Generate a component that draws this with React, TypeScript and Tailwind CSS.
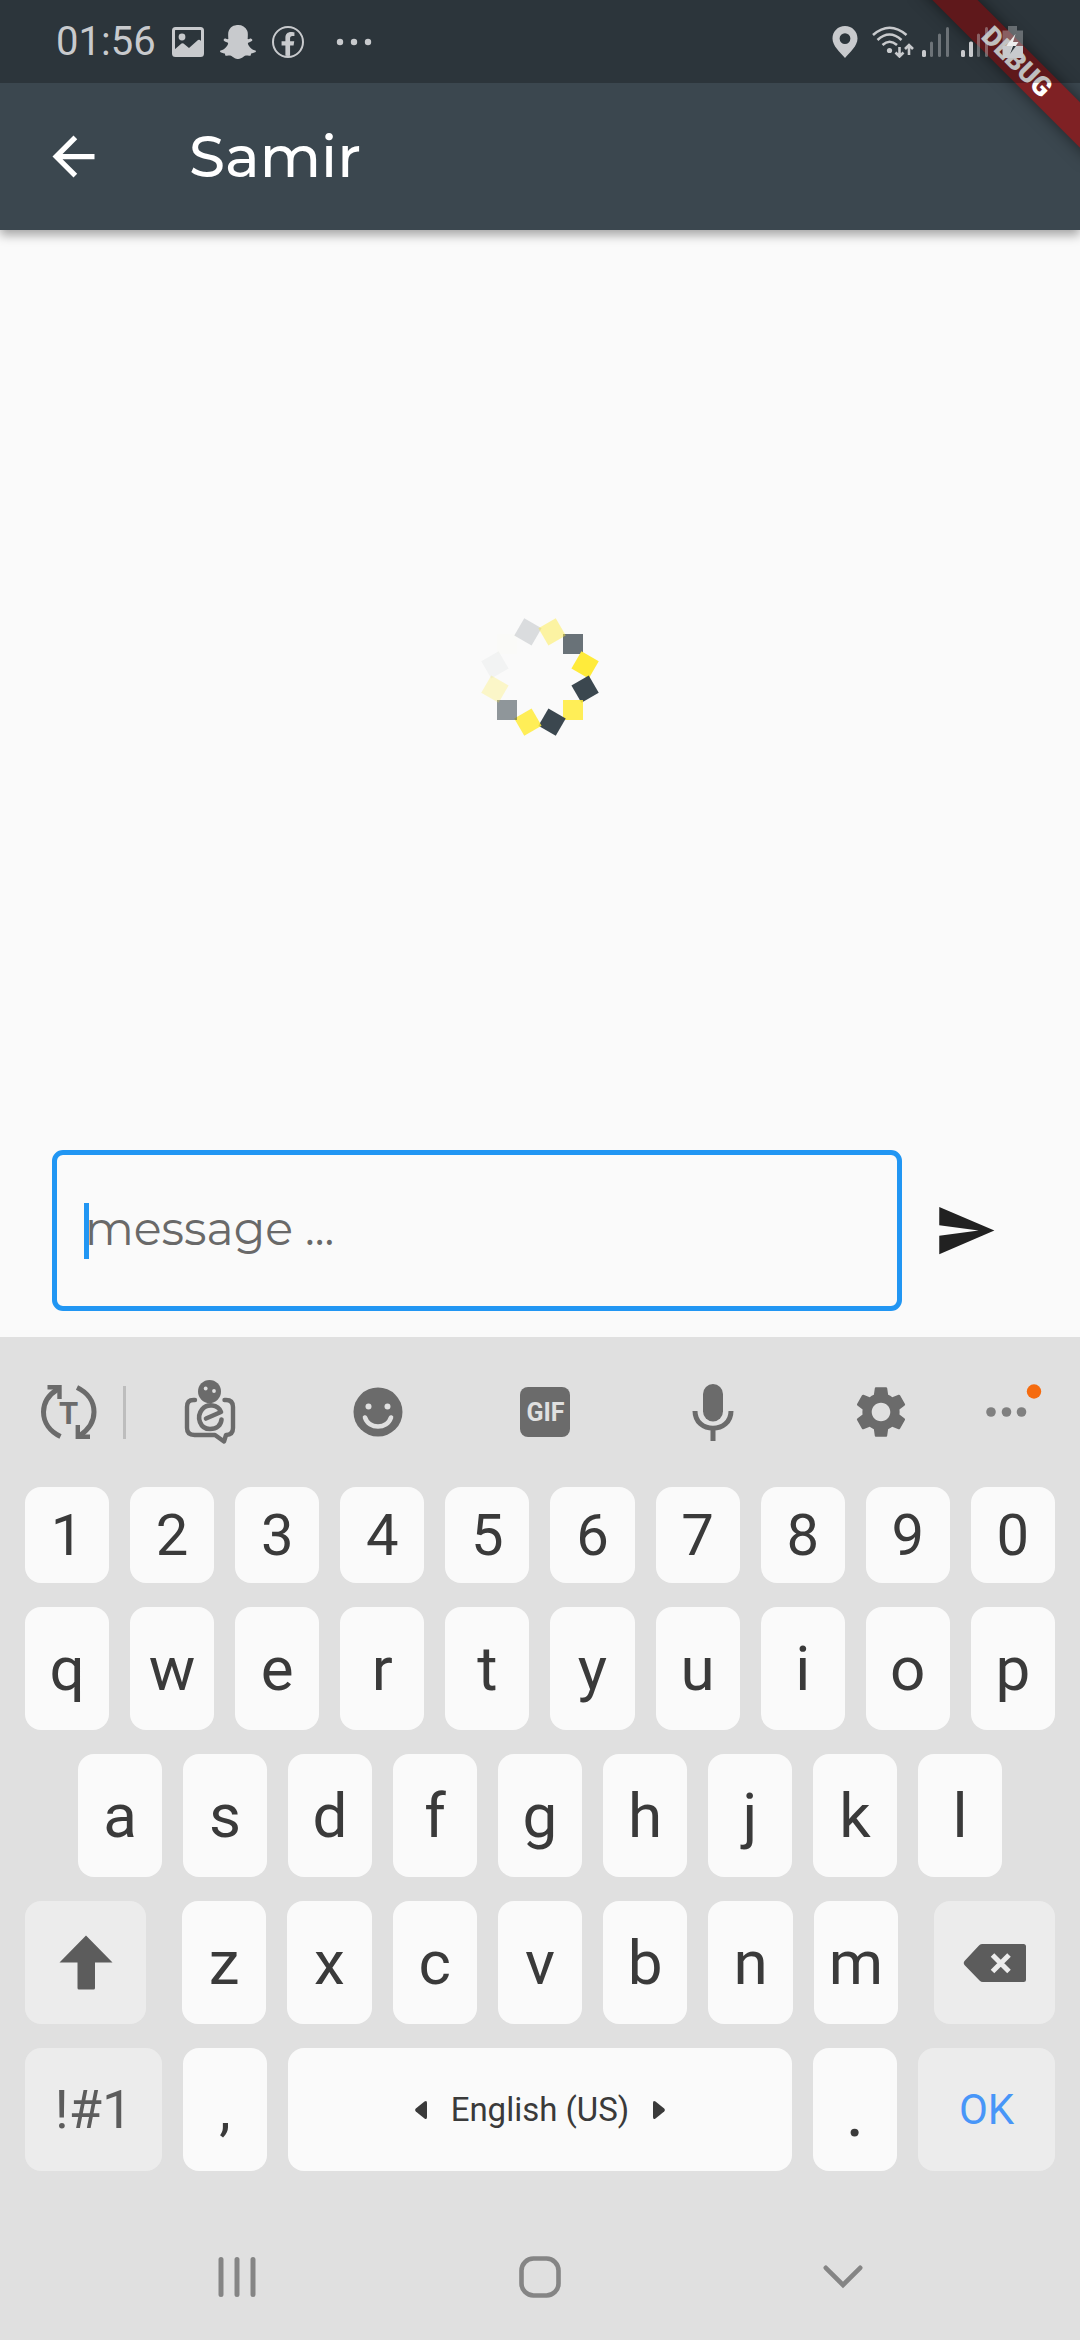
import type { ReactNode } from "react";
import { FaFacebookF, FaSnapchatGhost } from "react-icons/fa";
import { MdArrowBack, MdSend, MdSettings } from "react-icons/md";

const SPINNER_SQUARES = [
  { fill: "#3b474f", opacity: 0.76 },
  { fill: "#ffeb3b", opacity: 1 },
  { fill: "#3b474f", opacity: 1 },
  { fill: "#ffeb3b", opacity: 0.86 },
  { fill: "#3b474f", opacity: 1 },
  { fill: "#ffeb3b", opacity: 0.86 },
  { fill: "#3b474f", opacity: 0.56 },
  { fill: "#ffeb3b", opacity: 0.26 },
  { fill: "#3b474f", opacity: 0.04 },
  { fill: "#ffeb3b", opacity: 0.01 },
  { fill: "#3b474f", opacity: 0.16 },
  { fill: "#ffeb3b", opacity: 0.46 },
];

function Spinner() {
  return (
    <svg role="status" aria-label="Loading" className="size-32" viewBox="-64 -64 128 128">
      {SPINNER_SQUARES.map((s, i) => (
        <rect
          key={i}
          x="23"
          y="-43"
          width="20"
          height="20"
          fill={s.fill}
          fillOpacity={s.opacity}
          transform={`rotate(${i * 30})`}
        />
      ))}
    </svg>
  );
}

function PictureIcon() {
  return (
    <svg className="h-[30px] w-8" viewBox="0 0 32 30" fill="none">
      <rect x="1.5" y="1.5" width="29" height="27" rx="2" stroke="currentColor" strokeWidth="3" />
      <circle cx="10" cy="10" r="3.4" fill="currentColor" />
      <path d="M2 23 9.500 16.500Q10.500 16 11.500 16.500L17 21 26 13Q27 12.300 28 13L31 16V28H2Z" fill="currentColor" />
    </svg>
  );
}

function DotsIcon() {
  return (
    <svg className="h-8 w-9" viewBox="0 0 36 32" fill="currentColor">
      <circle cx="4" cy="16" r="3.2" />
      <circle cx="18" cy="16" r="3.2" />
      <circle cx="32" cy="16" r="3.2" />
    </svg>
  );
}

function PinIcon() {
  return (
    <svg className="h-8 w-[26px]" viewBox="0 0 26 32" fill="currentColor" fillRule="evenodd">
      <path d="M13 0C5.800 0 .5 5.500 .5 12.500 .5 20 8 26 13 32 18 26 25.500 20 25.500 12.500 25.500 5.500 20.200 0 13 0ZM13 7.200a5.400 5.400 0 1 1 0 10.800 5.400 5.400 0 0 1 0-10.800Z" />
    </svg>
  );
}

function WifiIcon() {
  return (
    <svg className="h-8 w-[42px]" viewBox="0 0 42 32" fill="none" stroke="currentColor" strokeWidth="2.600">
      <path d="M1 9Q17.500-5.500 34.500 9M5.500 14Q17.500 3 29.500 14M10.500 19Q17.500 12.500 25 19" />
      <circle cx="17.500" cy="24.500" r="2.600" fill="currentColor" stroke="none" />
      <path d="M27.500 21V30M23.500 26.500 27.500 30.500 31.500 26.500M37 29V20M33 23 37 19 41 23" strokeWidth="2.600" />
    </svg>
  );
}

function SignalIcon({ level }: { level: number }) {
  const tops = [24, 15.5, 7.5, 1];
  return (
    <svg className="h-8 w-7" viewBox="0 0 28 32" fill="currentColor">
      {tops.map((top, i) => (
        <rect
          key={top}
          x={i * 8}
          y={top}
          width={i < level ? 4 : 3}
          height={31 - top}
          rx="1.500"
          fillOpacity={i < level ? 1 : 0.42}
        />
      ))}
    </svg>
  );
}

function BatteryIcon() {
  return (
    <svg className="h-8 w-[22px]" viewBox="0 0 22 32" fill="currentColor">
      <path d="M6 0H15V4.500H21V20H.5V4.500H6Z" fillOpacity="0.4" />
      <path d="M.5 20H21V30.500Q21 32 19.500 32H2Q.5 32 .5 30.500Z" />
      <path d="M13.500 8 4 20H10L8 28 16.500 16H11Z" fill="#ededed" />
      <path d="M8 28 11 20H14Z" fill="#2c353b" />
    </svg>
  );
}

function TranslateIcon() {
  return (
    <svg className="h-14 w-14" viewBox="0 0 56 56" fill="none" stroke="currentColor" strokeWidth="5">
      <path d="M19.500 52.500C9 47.500 2.500 38.500 2.500 28 2.500 19 8 10.500 17 5" />
      <path d="M6.500 3.300H18.500V15" strokeWidth="4.400" />
      <path d="M36 3.500C46.500 8.500 53 17.500 53 28 53 37 47.500 45.500 39 51.500" />
      <path d="M49 52.700H36.800V41" strokeWidth="4.400" />
      <text x="27.500" y="39.500" textAnchor="middle" fontFamily="Roboto" fontWeight="700" fontSize="31" fill="currentColor" stroke="none">
        T
      </text>
    </svg>
  );
}

function AvatarStickerIcon() {
  return (
    <svg className="h-16 w-[52px]" viewBox="0 0 52 64" fill="none" stroke="currentColor" strokeWidth="4.400" strokeLinecap="round" strokeLinejoin="round">
      <circle cx="25.500" cy="11.500" r="11.500" fill="currentColor" stroke="none" />
      <circle cx="21.700" cy="8.500" r="1.900" fill="#e0e0e0" stroke="none" />
      <circle cx="30" cy="11" r="1.900" fill="#e0e0e0" stroke="none" />
      <path d="M11 20H9.500Q3 20 3 27V48Q3 55 10.500 55H31L40 61.500 42 55Q49 55 49 48V27Q49 20 42 20H40.500" />
      <path d="M22 38.500 37 32C34 24 23 23.500 18 29.500 12 37 16 49 26 49 33 49 37 45 37.500 39.500" strokeWidth="4.600" />
    </svg>
  );
}

function SmileIcon() {
  return (
    <svg className="size-[50px]" viewBox="0 0 50 50">
      <circle cx="25" cy="25" r="24.500" fill="currentColor" />
      <circle cx="15.500" cy="19.500" r="3" fill="#e0e0e0" />
      <circle cx="34.500" cy="19.500" r="3" fill="#e0e0e0" />
      <path d="M12 30.500C16 42.500 34 42.500 38 30.500" fill="none" stroke="#e0e0e0" strokeWidth="4.600" strokeLinecap="round" />
    </svg>
  );
}

function MicIcon() {
  return (
    <svg className="h-[58px] w-[42px]" viewBox="0 0 42 58" fill="none" stroke="currentColor" strokeWidth="5">
      <rect x="11" y="1" width="20" height="37.500" rx="10" fill="currentColor" stroke="none" />
      <path d="M3 28C3 51 39 51 39 28M21 46V58" />
    </svg>
  );
}

function MoreIcon() {
  return (
    <svg className="h-14 w-14" viewBox="0 0 56 56">
      <g fill="#808080">
        <circle cx="5" cy="28" r="4.800" />
        <circle cx="20.500" cy="28" r="4.800" />
        <circle cx="35.500" cy="28" r="4.800" />
      </g>
      <circle cx="48" cy="7.500" r="7.200" fill="#f56b0f" />
    </svg>
  );
}

function ShiftIcon() {
  return (
    <svg className="h-14 w-14" viewBox="0 0 56 56" fill="currentColor">
      <path d="M28 .5 54.500 27.500H37V53Q37 54.500 35.500 54.500H21Q19.500 54.500 19.500 53V27.500H1.500Z" />
    </svg>
  );
}

function BackspaceIcon() {
  return (
    <svg className="h-10 w-16" viewBox="0 0 64 40">
      <path d="M18 1H60.500Q63 1 63 3.500V36.500Q63 39 60.500 39H20Q18 39 16.500 37.500L1.500 22Q0 20 1.500 18L15.500 3Q17 1 19 1Z" fill="currentColor" />
      <path d="M29.500 12 46 28.500M46 12 29.500 28.500" stroke="#ececec" strokeWidth="5" />
    </svg>
  );
}

type KeyProps = { children: ReactNode; label?: string; className?: string };

function Key({ children, label, className = "h-[123px] flex-1 text-[62px]" }: KeyProps) {
  return (
    <button
      type="button"
      aria-label={label}
      className={`flex min-w-0 items-center justify-center rounded-2xl bg-[#fafafa] text-[#3a3a3a] ${className}`}
    >
      {children}
    </button>
  );
}

function SpecialKey({ children, label, className = "" }: KeyProps) {
  return (
    <button
      type="button"
      aria-label={label}
      className={`flex h-[123px] shrink-0 items-center justify-center rounded-2xl bg-[#ececec] ${className}`}
    >
      {children}
    </button>
  );
}

function letters(row: string) {
  return row.split("").map((c) => <Key key={c}>{c}</Key>);
}

function StatusBar() {
  return (
    <div className="relative z-20 flex h-[83px] items-center bg-black/25 pr-14 pl-14 text-[#c8cacd]">
      <time className="mr-4 text-[40px] leading-none">01:56</time>
      <div className="flex items-center gap-4">
        <PictureIcon />
        <FaSnapchatGhost className="size-9" />
        <span className="flex size-8 items-end justify-center overflow-hidden rounded-full border-2 border-current">
          <FaFacebookF className="size-6" />
        </span>
        <span className="ml-4">
          <DotsIcon />
        </span>
      </div>
      <div className="ml-auto flex items-center">
        <PinIcon />
        <span className="ml-[14px]">
          <WifiIcon />
        </span>
        <span className="ml-2">
          <SignalIcon level={1} />
        </span>
        <span className="ml-[11px]">
          <SignalIcon level={2} />
        </span>
        <span className="ml-[13px]">
          <BatteryIcon />
        </span>
      </div>
    </div>
  );
}

function DebugBanner() {
  return (
    <div className="pointer-events-none absolute top-0 right-0 z-10 size-[220px] overflow-hidden">
      <div className="absolute top-[46px] left-[37px] flex h-8 w-60 rotate-45 items-center justify-center bg-[#7f2124] text-[27px] leading-none font-black text-white shadow-[0_0_16px_rgba(0,0,0,0.5)]">
        DEBUG
      </div>
    </div>
  );
}

function Toolbar() {
  return (
    <div className="flex h-[150px] items-center text-[#6b6b6b]">
      <button type="button" aria-label="Text conversion" className="w-[123px] shrink-0 pl-[41px]">
        <TranslateIcon />
      </button>
      <div className="h-[53px] w-[3px] bg-[#bdbdbd]" />
      <button type="button" aria-label="Stickers" className="flex flex-1 justify-center">
        <AvatarStickerIcon />
      </button>
      <button type="button" aria-label="Emoji" className="flex flex-1 justify-center">
        <SmileIcon />
      </button>
      <button type="button" className="flex flex-1 justify-center">
        <span className="flex size-[50px] items-center justify-center rounded-lg bg-[#6b6b6b] text-[25px] leading-none font-bold text-[#e0e0e0]">
          GIF
        </span>
      </button>
      <button type="button" aria-label="Voice input" className="flex flex-1 justify-center">
        <MicIcon />
      </button>
      <button type="button" aria-label="Settings" className="flex flex-1 justify-center">
        <MdSettings className="size-[62px]" />
      </button>
      <button type="button" aria-label="More" className="w-[115px] shrink-0 pl-[21px]">
        <MoreIcon />
      </button>
    </div>
  );
}

function Keyboard() {
  return (
    <section aria-label="Keyboard" className="pb-[43px]">
      <Toolbar />
      <div className="flex flex-col gap-6 px-[25px]">
        <div className="flex gap-[21px]">
          {"1234567890".split("").map((c) => (
            <Key key={c} className="h-24 flex-1 text-[58px]">
              {c}
            </Key>
          ))}
        </div>
        <div className="flex gap-[21px]">{letters("qwertyuiop")}</div>
        <div className="flex gap-[21px] px-[53px]">{letters("asdfghjkl")}</div>
        <div className="flex gap-9">
          <SpecialKey label="Shift" className="w-[121px] text-[#5c5c5c]">
            <ShiftIcon />
          </SpecialKey>
          <div className="flex flex-1 gap-[21px]">{letters("zxcvbnm")}</div>
          <SpecialKey label="Backspace" className="w-[121px] text-[#5c5c5c]">
            <BackspaceIcon />
          </SpecialKey>
        </div>
        <div className="flex gap-[21px]">
          <SpecialKey className="w-[137px] text-[54px] text-[#5c5c5c]">!#1</SpecialKey>
          <Key className="h-[123px] w-[84px] shrink-0 text-[58px]">,</Key>
          <Key className="h-[123px] flex-1 gap-6 text-[33px]">
            <svg className="h-5 w-3" viewBox="0 0 12 20" fill="currentColor">
              <path d="M12 3V17Q12 20 9.500 18.500L.8 11.500Q-.5 10 .8 8.500L9.500 1.500Q12 0 12 3Z" />
            </svg>
            English (US)
            <svg className="h-5 w-3" viewBox="0 0 12 20" fill="currentColor">
              <path d="M0 3V17Q0 20 2.500 18.500L11.200 11.500Q12.500 10 11.200 8.500L2.500 1.500Q0 0 0 3Z" />
            </svg>
          </Key>
          <Key className="h-[123px] w-[84px] shrink-0 pt-1 text-[72px]">.</Key>
          <SpecialKey className="w-[137px] text-[42px] text-[#4896f8]">OK</SpecialKey>
        </div>
      </div>
    </section>
  );
}

function NavigationBar() {
  return (
    <nav className="grid h-[126px] grid-cols-3 items-center justify-items-center px-[86px] text-[#858585]">
      <button type="button" aria-label="Recent apps">
        <svg className="h-[42px] w-10" viewBox="0 0 40 42" stroke="currentColor" strokeWidth="5" strokeLinecap="round">
          <path d="M4 3.500V38.500M20 3.500V38.500M36 3.500V38.500" />
        </svg>
      </button>
      <button type="button" aria-label="Home">
        <svg className="size-[42px]" viewBox="0 0 42 42" fill="none" stroke="currentColor" strokeWidth="4.600">
          <rect x="2.500" y="2.500" width="37" height="37" rx="12" />
        </svg>
      </button>
      <button type="button" aria-label="Hide keyboard">
        <svg className="h-6 w-10" viewBox="0 0 40 24" fill="none" stroke="currentColor" strokeWidth="4.600" strokeLinecap="round">
          <path d="M2.800 2.800 20 20 37.200 2.800" />
        </svg>
      </button>
    </nav>
  );
}

export default function App() {
  return (
    <div className="flex min-h-screen flex-col bg-[#fafafa] font-['Roboto',sans-serif]">
      <header className="relative z-10 bg-[#3b474f] shadow-[0_5px_10px_rgba(0,0,0,0.35)]">
        <StatusBar />
        <div className="flex h-[147px] items-center px-[42px] text-white">
          <button type="button" aria-label="Back">
            <MdArrowBack className="size-[63px]" />
          </button>
          <h1 className="ml-[84px] font-['Montserrat','Inter',sans-serif] text-[58px] leading-none font-medium">Samir</h1>
        </div>
        <DebugBanner />
      </header>

      <main className="flex flex-1 flex-col">
        <div className="flex flex-1 items-center justify-center">
          <Spinner />
        </div>
        <form className="flex items-center px-[52px] py-[26px]" onSubmit={(e) => e.preventDefault()}>
          <div className="relative flex flex-1 items-center">
            <input
              type="text"
              aria-label="Message"
              placeholder="message ..."
              className="h-[161px] w-full rounded-[11px] border-[5px] border-[#2196f3] bg-transparent px-7 pb-1 font-['Montserrat','Inter',sans-serif] text-[46px] font-normal text-[#212121] outline-none placeholder:text-[#696969]"
            />
            <span className="absolute left-8 h-14 w-[5px] bg-[#2196f3]" />
          </div>
          <button type="submit" aria-label="Send" className="flex w-[126px] justify-center text-[#212121]">
            <MdSend className="size-[63px]" />
          </button>
        </form>
      </main>

      <footer className="bg-[#e0e0e0]">
        <Keyboard />
        <NavigationBar />
      </footer>
    </div>
  );
}
